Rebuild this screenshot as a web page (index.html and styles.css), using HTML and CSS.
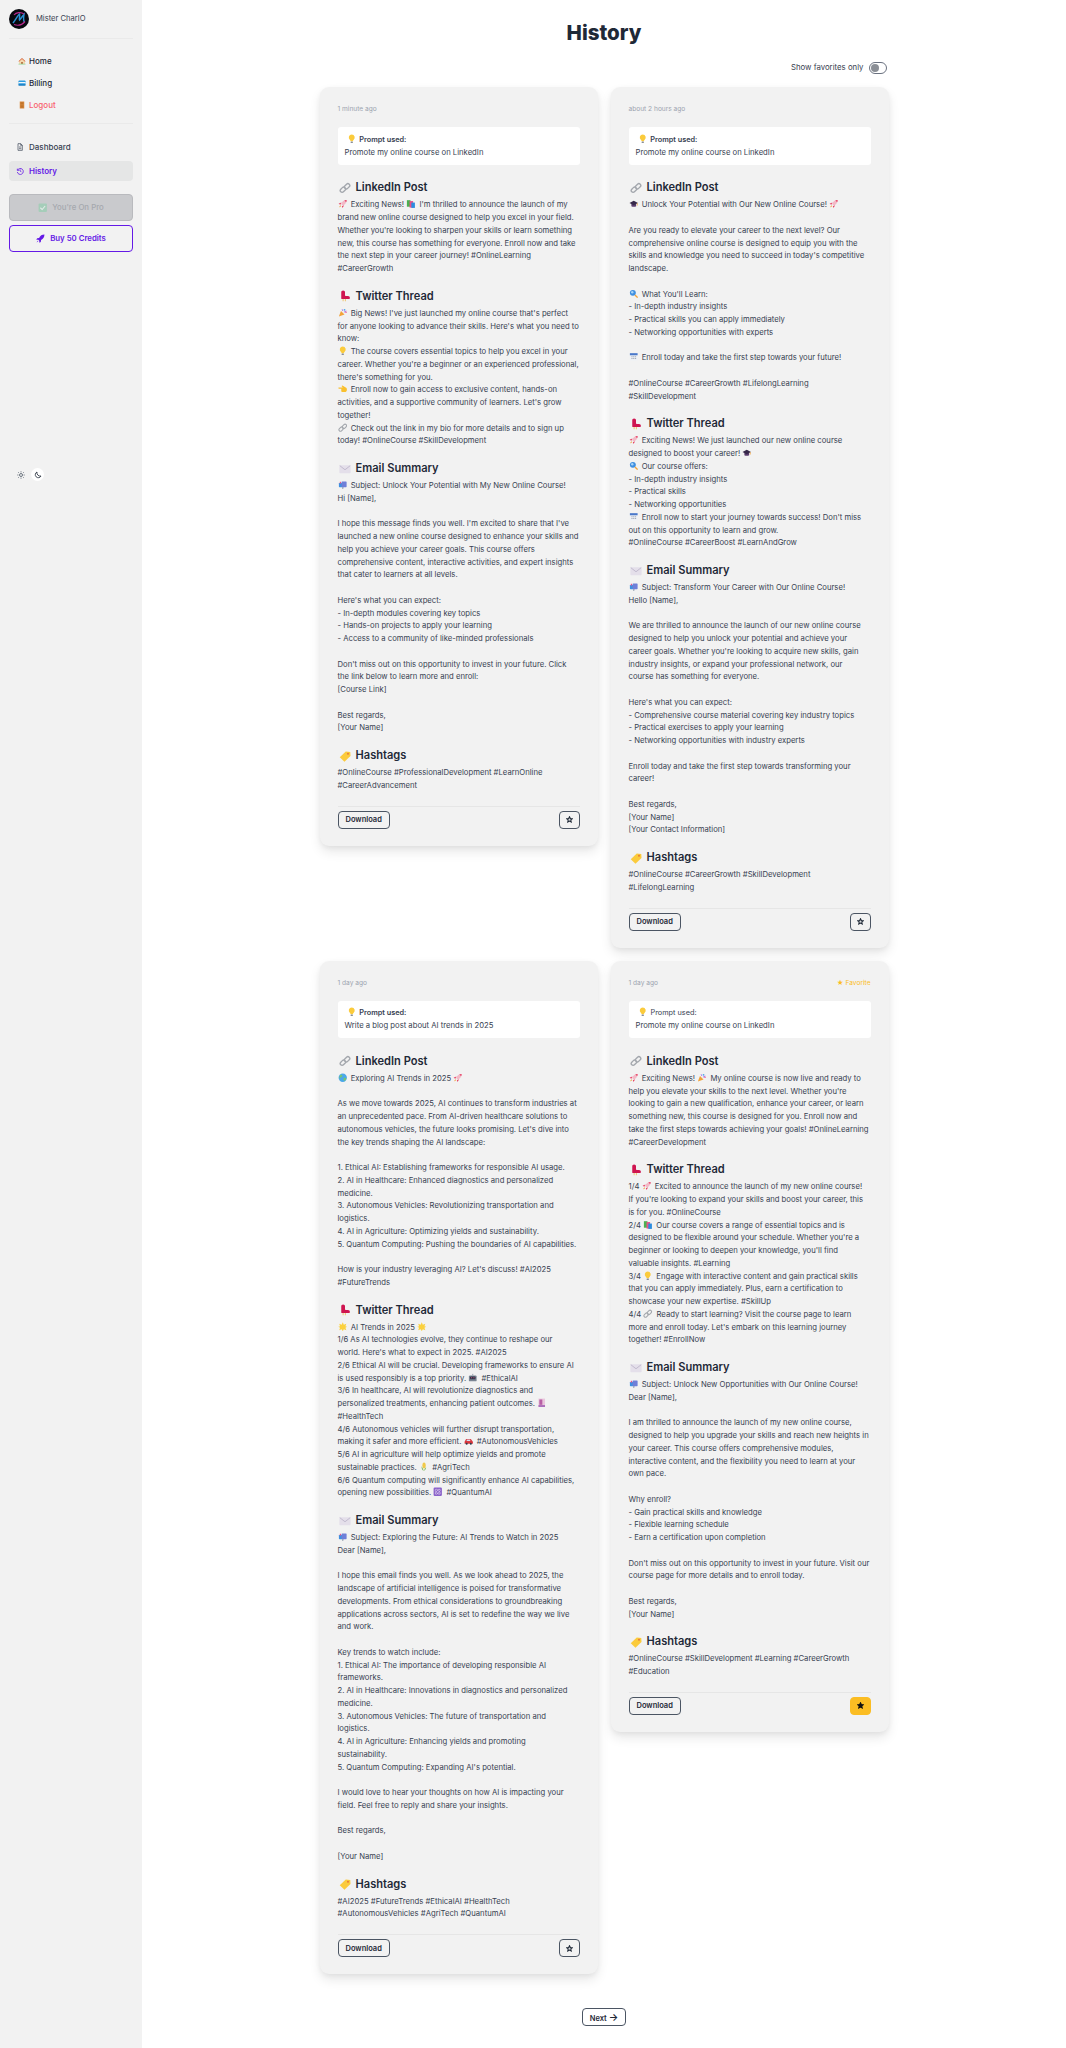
FILE: index.html
```html
<!DOCTYPE html>
<html lang="en">
<head>
  <meta charset="UTF-8" />
  <title>History</title>
  <link rel="stylesheet" href="styles.css">
</head>

<body>

<!-- emoji and icon set -->
<svg class="defs" width="0" height="0" aria-hidden="true">
  <symbol id="e-house" viewBox="0 0 16 16"><path d="M2 8.500 8 3l6 5.500V14H2z" fill="#f4d9b0"/><path d="M1 8.500 8 2l7 6.500-1 1L8 4 2 9.500z" fill="#d9653b"/><rect x="6.500" y="10" width="3" height="4" fill="#a8622f"/><rect x="1" y="13.500" width="14" height="1.500" fill="#8fd694"/></symbol>
  <symbol id="e-card" viewBox="0 0 16 16"><rect x="1" y="3" width="14" height="10" rx="1.500" fill="#2b9be0"/><rect x="1" y="6" width="14" height="2.500" fill="#f2f6fa"/><rect x="1" y="11" width="14" height="2" fill="#1273b5"/></symbol>
  <symbol id="e-door" viewBox="0 0 16 16"><rect x="3.500" y="1" width="9" height="14" fill="#d98a3d"/><rect x="5" y="2.500" width="6" height="4.500" fill="#c0742c"/><rect x="5" y="8.500" width="6" height="5" fill="#c0742c"/></symbol>
  <symbol id="e-bulb" viewBox="0 0 16 16"><path d="M8 1a5 5 0 0 0-3 9c.7.6 1 1.200 1 2h4c0-.8.3-1.400 1-2A5 5 0 0 0 8 1z" fill="#fbcb3c"/><rect x="6" y="12.500" width="4" height="2.500" rx=".8" fill="#8a8f98"/></symbol>
  <symbol id="e-link" viewBox="0 0 16 16"><g fill="none" stroke="#a3a7ad" stroke-width="1.800"><rect x="1.200" y="7.800" width="8" height="5" rx="2.500" transform="rotate(-45 5.200 10.300)"/><rect x="6.800" y="3.200" width="8" height="5" rx="2.500" transform="rotate(-45 10.800 5.700)"/></g></symbol>
  <symbol id="e-rocket" viewBox="0 0 16 16"><path d="M14.500 1.500c-4.500.2-7.500 2.500-9.500 6.500l3 3c4-2 6.300-5 6.500-9.500z" fill="#f3b9c6"/><path d="M14.500 1.500c-1.500 0-2.700.3-3.800.8l3 3c.5-1.100.8-2.300.8-3.800z" fill="#e6395f"/><path d="M5.500 6 1 8l3 1.500zM10 10.500 8 15l-1.500-3z" fill="#e6395f"/><path d="M4 10.500 1.500 14.500 5.500 12z" fill="#f2a33a"/></symbol>
  <symbol id="e-books" viewBox="0 0 16 16"><rect x="1.500" y="2" width="6" height="11" fill="#4caf50"/><rect x="6" y="3.500" width="6" height="11" fill="#e8508a"/><rect x="9" y="6" width="6" height="9" fill="#2b8de0"/></symbol>
  <symbol id="e-thread" viewBox="0 0 16 16"><path d="M3 3c0-1.500 1-2.500 2.500-2.500S8 1.500 8 3v3.500c0 1 .5 1.500 1.500 1.500H12c1.500 0 2.500 1 2.500 2.500v.5c0 .5-.5 1-1 1h-10c-.5 0-.5-.5-.5-1z" fill="#cf1550"/><path d="M5.500 12v3M8.500 12v3" stroke="#f0c36a" stroke-width="1.300"/></symbol>
  <symbol id="e-party" viewBox="0 0 16 16"><path d="M1.500 14.500 5 5l6 6z" fill="#f2a33a"/><circle cx="11" cy="3" r="1.500" fill="#4aa8e8"/><circle cx="13.500" cy="7" r="1.300" fill="#e8508a"/><path d="M7 2l1 3M10 7l4-2" stroke="#9b5de5" stroke-width="1.300"/></symbol>
  <symbol id="e-point" viewBox="0 0 16 16"><path d="M1 6h7l-2-2.500 1.500-1L13 6c1.500.7 2 2 2 3.500 0 2.500-1.500 4-4 4H7c-1 0-1.500-.5-1.500-1.300V8H1.500C.5 8 .5 6 1 6z" fill="#f9c02e"/></symbol>
  <symbol id="e-mail" viewBox="0 0 16 16"><rect x=".5" y="3" width="15" height="10.500" rx="1" fill="#e4dfea"/><path d="M1 3.500 8 9l7-5.500" fill="none" stroke="#b7afc4" stroke-width="1"/></symbol>
  <symbol id="e-mailbox" viewBox="0 0 16 16"><rect x="1.500" y="5" width="9" height="7" rx="1" fill="#3f8fe0"/><rect x="6" y="2.500" width="8.500" height="9.500" rx="1" fill="#6f7fd8"/><rect x="7" y="12" width="2" height="3" fill="#9aa3b2"/><rect x="3" y="3" width="2" height="3" fill="#e8508a"/></symbol>
  <symbol id="e-tag" viewBox="0 0 16 16"><path d="M1 9.500 9 2l6 .5.300 5.500-8 7.500z" fill="#fbcb3c"/><circle cx="12" cy="5" r="1.300" fill="#e8793a"/></symbol>
  <symbol id="e-cap" viewBox="0 0 16 16"><path d="M4 8v4c1.500 1.300 6.500 1.300 8 0V8z" fill="#5a3d6e"/><path d="M8 3 .8 6.800 8 10.500l7.200-3.700z" fill="#36284a"/><path d="M14 7v4" stroke="#f2a33a" stroke-width="1.200"/></symbol>
  <symbol id="e-lens" viewBox="0 0 16 16"><circle cx="6.500" cy="6.500" r="5" fill="#3f8fe0"/><circle cx="5.500" cy="5.500" r="2" fill="#a9d4f5"/><path d="m10 10 4.500 4.500" stroke="#f2a33a" stroke-width="2.200"/></symbol>
  <symbol id="e-cal" viewBox="0 0 16 16"><rect x="1.500" y="2" width="13" height="12.500" rx="1" fill="#eef1f6"/><rect x="1.500" y="2" width="13" height="3.500" fill="#4a78c9"/><path d="M4 8h2M7 8h2M10 8h2M4 11h2M7 11h2M10 11h2" stroke="#8b95a6" stroke-width="1.300"/></symbol>
  <symbol id="e-globe" viewBox="0 0 16 16"><circle cx="8" cy="8" r="7" fill="#4aa8e8"/><path d="M5 2.500c2 1 3 2.500 1.500 4-1 1-3 1-3.500 3C2 8 2.500 4 5 2.500zM10 8c2-.5 3.500 0 4 1-.5 2.500-2 4-3.500 4.500-1-1.500-1.500-4-.5-5.500z" fill="#77c66e"/></symbol>
  <symbol id="e-glow" viewBox="0 0 16 16"><path d="m8 .5 1.800 4 4.200-1.500-1.500 4.200 3 .8-3 1.800 1.500 4L9.800 12 8 15.500 6.200 12 2 13.800l1.500-4-3-1.800 3-.8L2 3l4.200 1.500z" fill="#fbd13f"/></symbol>
  <symbol id="e-robot" viewBox="0 0 16 16"><rect x="1.500" y="4" width="13" height="10" rx="2" fill="#7b8594"/><rect x="3.500" y="6" width="9" height="4.500" rx="1" fill="#2f3747"/><circle cx="6" cy="8" r="1" fill="#e8508a"/><circle cx="10" cy="8" r="1" fill="#e8508a"/><path d="M8 1.500V4" stroke="#7b8594" stroke-width="1.300"/></symbol>
  <symbol id="e-hosp" viewBox="0 0 16 16"><rect x="2.500" y="1" width="11" height="14" fill="#e9c6dc"/><rect x="4" y="2.500" width="5" height="9" fill="#b85fa5"/><rect x="2.500" y="12" width="11" height="3" fill="#a767b8"/></symbol>
  <symbol id="e-car" viewBox="0 0 16 16"><path d="M1 9.500 3.500 5h8L15 9.500V13H1z" fill="#d8353c"/><rect x="4.500" y="6" width="6" height="2.500" fill="#cfe3f2"/><circle cx="4.500" cy="13" r="1.700" fill="#2f3747"/><circle cx="11.500" cy="13" r="1.700" fill="#2f3747"/></symbol>
  <symbol id="e-corn" viewBox="0 0 16 16"><ellipse cx="8.500" cy="6" rx="2.800" ry="5" fill="#f0c94a"/><path d="M8 15C4.500 13 4 9 4.500 7c1 2.500 2.500 4 3.500 8zM8.500 15c2.500-1.500 3.500-3.500 3.500-6-1.500 1.500-3 3-3.500 6z" fill="#7cb95a"/></symbol>
  <symbol id="e-atom" viewBox="0 0 16 16"><rect x="1" y="1" width="14" height="14" rx="2" fill="#8a63c9"/><g fill="none" stroke="#e9def7" stroke-width=".9"><ellipse cx="8" cy="8" rx="5.500" ry="2.200" transform="rotate(45 8 8)"/><ellipse cx="8" cy="8" rx="5.500" ry="2.200" transform="rotate(-45 8 8)"/></g></symbol>
  <symbol id="e-check" viewBox="0 0 16 16"><rect x="1" y="1" width="14" height="14" rx="1.500" fill="#a5cdb9"/><path d="m4 8 3 3 5-6" fill="none" stroke="#e5ece9" stroke-width="1.800"/></symbol>
  <symbol id="i-star" viewBox="0 0 16 16"><path d="m8 1.800 1.900 4 4.400.5-3.300 3 .9 4.400L8 11.500l-3.900 2.200.9-4.400-3.300-3 4.400-.5z"/></symbol>
</svg>

<div class="layout">

  <aside class="sidebar">
    <div class="profile">
      <svg class="avatar" viewBox="0 0 20 20">
        <circle cx="10" cy="10" r="10" fill="#07090f"/>
        <path d="M4 14C7 10 9 6 10.500 5c.5 2-.5 5 0 6 1.500-1.500 3-4 4.500-5.500-.5 3-1 6 .5 7.500" fill="none" stroke="#2a8fd0" stroke-width="1.500"/>
        <path d="M5 15.500c4 1.500 8 .5 11-3M15 5C12 2.500 7 3.500 5 6" fill="none" stroke="#b72a8c" stroke-width="1.200"/>
      </svg>
      <span>Mister CharlO</span>
    </div>

    <nav class="nav-top">
      <a class="nav-item"><svg class="nav-emo"><use href="#e-house"/></svg>Home</a>
      <a class="nav-item"><svg class="nav-emo"><use href="#e-card"/></svg>Billing</a>
      <a class="nav-item logout"><svg class="nav-emo"><use href="#e-door"/></svg>Logout</a>
    </nav>

    <nav class="nav-main">
      <a class="nav-link">
        <svg class="nav-icon" viewBox="0 0 24 24" fill="none" stroke="currentColor" stroke-width="2"><path d="M6 2h8l5 5v15H6z"/><path d="M9 12h7M9 17h7M14 2v5h5"/></svg>
        Dashboard
      </a>
      <a class="nav-link active">
        <svg class="nav-icon" viewBox="0 0 24 24" fill="none" stroke="currentColor" stroke-width="2.400"><path d="M4 5v5h5"/><path d="M4.500 10A9 9 0 1 1 4 15"/><path d="M12 7v5l4 2"/></svg>
        History
      </a>
    </nav>

    <button class="side-btn pro"><svg class="emo"><use href="#e-check"/></svg> You're On Pro</button>
    <button class="side-btn buy">
      <svg class="buy-icon" viewBox="0 0 16 16" fill="currentColor"><path d="M15 1c-4.500 0-7.500 2-9.500 6L2 7.500 0.500 10l3.500.3 1.700 1.700.3 3.500 2.500-1.500.5-3.500C13 8.500 15 5.500 15 1z"/><path d="M3 12l-2 3 3-2z"/></svg>
      Buy 50 Credits
    </button>

    <div class="theme-row">
      <span class="theme-btn">
        <svg viewBox="0 0 24 24" fill="none" stroke="#4b5563" stroke-width="2.400"><circle cx="12" cy="12" r="4.500"/><path d="M12 1v3M12 20v3M1 12h3M20 12h3M4 4l2 2M18 18l2 2M4 20l2-2M18 6l2-2"/></svg>
      </span>
      <span class="theme-btn on">
        <svg viewBox="0 0 24 24" fill="none" stroke="#1f2937" stroke-width="2.400"><path d="M9 3a9 9 0 1 0 12 12A10 10 0 0 1 9 3z"/></svg>
      </span>
    </div>
  </aside>

  <main class="main">
    <h1 class="page-title">History</h1>

    <div class="filter-row">
      <span>Show favorites only</span>
      <span class="toggle"><span class="knob"></span></span>
    </div>

    <div class="history-grid">

      <!-- card 1 -->
      <article class="card">
        <div class="card-top"><span class="time">1 minute ago</span></div>
        <div class="prompt">
          <div class="prompt-label"><svg class="emo"><use href="#e-bulb"/></svg> Prompt used:</div>
          <div>Promote my online course on LinkedIn</div>
        </div>

        <h3 class="sec-title"><svg class="sec-emo"><use href="#e-link"/></svg>LinkedIn Post</h3>
        <p class="sec-text"><svg class="emo"><use href="#e-rocket"/></svg> Exciting News! <svg class="emo"><use href="#e-books"/></svg> I'm thrilled to announce the launch of my brand new online course designed to help you excel in your field. Whether you're looking to sharpen your skills or learn something new, this course has something for everyone. Enroll now and take the next step in your career journey! #OnlineLearning #CareerGrowth</p>

        <h3 class="sec-title"><svg class="sec-emo"><use href="#e-thread"/></svg>Twitter Thread</h3>
        <p class="sec-text"><svg class="emo"><use href="#e-party"/></svg> Big News! I've just launched my online course that's perfect
for anyone looking to advance their skills. Here's what you need to know:
<svg class="emo"><use href="#e-bulb"/></svg> The course covers essential topics to help you excel in your career. Whether you're a beginner or an experienced professional, there's something for you.
<svg class="emo"><use href="#e-point"/></svg> Enroll now to gain access to exclusive content, hands-on activities, and a supportive community of learners. Let's grow together!
<svg class="emo"><use href="#e-link"/></svg> Check out the link in my bio for more details and to sign up today! #OnlineCourse #SkillDevelopment</p>

        <h3 class="sec-title"><svg class="sec-emo"><use href="#e-mail"/></svg>Email Summary</h3>
        <p class="sec-text"><svg class="emo"><use href="#e-mailbox"/></svg> Subject: Unlock Your Potential with My New Online Course!
Hi [Name],

I hope this message finds you well. I'm excited to share that I've launched a new online course designed to enhance your skills and help you achieve your career goals. This course offers comprehensive content, interactive activities, and expert insights that cater to learners at all levels.

Here's what you can expect:
- In-depth modules covering key topics
- Hands-on projects to apply your learning
- Access to a community of like-minded professionals

Don't miss out on this opportunity to invest in your future. Click the link below to learn more and enroll:
[Course Link]

Best regards,
[Your Name]</p>

        <h3 class="sec-title"><svg class="sec-emo"><use href="#e-tag"/></svg>Hashtags</h3>
        <p class="sec-text">#OnlineCourse #ProfessionalDevelopment #LearnOnline #CareerAdvancement</p>

        <div class="card-foot">
          <button class="btn">Download</button>
          <button class="btn star"><svg class="star-icon"><use href="#i-star"/></svg></button>
        </div>
      </article>

      <!-- card 2 -->
      <article class="card">
        <div class="card-top"><span class="time">about 2 hours ago</span></div>
        <div class="prompt">
          <div class="prompt-label"><svg class="emo"><use href="#e-bulb"/></svg> Prompt used:</div>
          <div>Promote my online course on LinkedIn</div>
        </div>

        <h3 class="sec-title"><svg class="sec-emo"><use href="#e-link"/></svg>LinkedIn Post</h3>
        <p class="sec-text"><svg class="emo"><use href="#e-cap"/></svg> Unlock Your Potential with Our New Online Course! <svg class="emo"><use href="#e-rocket"/></svg>

Are you ready to elevate your career to the next level? Our comprehensive online course is designed to equip you with the skills and knowledge you need to succeed in today's competitive landscape.

<svg class="emo"><use href="#e-lens"/></svg> What You'll Learn:
- In-depth industry insights
- Practical skills you can apply immediately
- Networking opportunities with experts

<svg class="emo"><use href="#e-cal"/></svg> Enroll today and take the first step towards your future!

#OnlineCourse #CareerGrowth #LifelongLearning #SkillDevelopment</p>

        <h3 class="sec-title"><svg class="sec-emo"><use href="#e-thread"/></svg>Twitter Thread</h3>
        <p class="sec-text"><svg class="emo"><use href="#e-rocket"/></svg> Exciting News! We just launched our new online course designed to boost your career! <svg class="emo"><use href="#e-cap"/></svg>
<svg class="emo"><use href="#e-lens"/></svg> Our course offers:
- In-depth industry insights
- Practical skills
- Networking opportunities
<svg class="emo"><use href="#e-cal"/></svg> Enroll now to start your journey towards success! Don't miss out on this opportunity to learn and grow.
#OnlineCourse #CareerBoost #LearnAndGrow</p>

        <h3 class="sec-title"><svg class="sec-emo"><use href="#e-mail"/></svg>Email Summary</h3>
        <p class="sec-text"><svg class="emo"><use href="#e-mailbox"/></svg> Subject: Transform Your Career with Our Online Course!
Hello [Name],

We are thrilled to announce the launch of our new online course designed to help you unlock your potential and achieve your career goals. Whether you're looking to acquire new skills, gain industry insights, or expand your professional network, our
course has something for everyone.

Here's what you can expect:
- Comprehensive course material covering key industry topics
- Practical exercises to apply your learning
- Networking opportunities with industry experts

Enroll today and take the first step towards transforming your career!

Best regards,
[Your Name]
[Your Contact Information]</p>

        <h3 class="sec-title"><svg class="sec-emo"><use href="#e-tag"/></svg>Hashtags</h3>
        <p class="sec-text">#OnlineCourse #CareerGrowth #SkillDevelopment #LifelongLearning</p>

        <div class="card-foot">
          <button class="btn">Download</button>
          <button class="btn star"><svg class="star-icon"><use href="#i-star"/></svg></button>
        </div>
      </article>

      <!-- card 3 -->
      <article class="card">
        <div class="card-top"><span class="time">1 day ago</span></div>
        <div class="prompt">
          <div class="prompt-label"><svg class="emo"><use href="#e-bulb"/></svg> Prompt used:</div>
          <div>Write a blog post about AI trends in 2025</div>
        </div>

        <h3 class="sec-title"><svg class="sec-emo"><use href="#e-link"/></svg>LinkedIn Post</h3>
        <p class="sec-text"><svg class="emo"><use href="#e-globe"/></svg> Exploring AI Trends in 2025 <svg class="emo"><use href="#e-rocket"/></svg>

As we move towards 2025, AI continues to transform industries at an unprecedented pace. From AI-driven healthcare solutions to autonomous vehicles, the future looks promising. Let's dive into the key trends shaping the AI landscape:

1. Ethical AI: Establishing frameworks for responsible AI usage.
2. AI in Healthcare: Enhanced diagnostics and personalized medicine.
3. Autonomous Vehicles: Revolutionizing transportation and logistics.
4. AI in Agriculture: Optimizing yields and sustainability.
5. Quantum Computing: Pushing the boundaries of AI capabilities.

How is your industry leveraging AI? Let's discuss! #AI2025 #FutureTrends</p>

        <h3 class="sec-title"><svg class="sec-emo"><use href="#e-thread"/></svg>Twitter Thread</h3>
        <p class="sec-text"><svg class="emo"><use href="#e-glow"/></svg> AI Trends in 2025 <svg class="emo"><use href="#e-glow"/></svg>
1/6 As AI technologies evolve, they continue to reshape our
world. Here's what to expect in 2025. #AI2025
2/6 Ethical AI will be crucial. Developing frameworks to ensure AI is used responsibly is a top priority. <svg class="emo"><use href="#e-robot"/></svg> #EthicalAI
3/6 In healthcare, AI will revolutionize diagnostics and personalized treatments, enhancing patient outcomes. <svg class="emo"><use href="#e-hosp"/></svg> #HealthTech
4/6 Autonomous vehicles will further disrupt transportation, making it safer and more efficient. <svg class="emo"><use href="#e-car"/></svg> #AutonomousVehicles
5/6 AI in agriculture will help optimize yields and promote sustainable practices. <svg class="emo"><use href="#e-corn"/></svg> #AgriTech
6/6 Quantum computing will significantly enhance AI capabilities, opening new possibilities. <svg class="emo"><use href="#e-atom"/></svg> #QuantumAI</p>

        <h3 class="sec-title"><svg class="sec-emo"><use href="#e-mail"/></svg>Email Summary</h3>
        <p class="sec-text"><svg class="emo"><use href="#e-mailbox"/></svg> Subject: Exploring the Future: AI Trends to Watch in 2025
Dear [Name],

I hope this email finds you well. As we look ahead to 2025, the landscape of artificial intelligence is poised for transformative developments. From ethical considerations to groundbreaking applications across sectors, AI is set to redefine the way we live and work.

Key trends to watch include:
1. Ethical AI: The importance of developing responsible AI frameworks.
2. AI in Healthcare: Innovations in diagnostics and personalized medicine.
3. Autonomous Vehicles: The future of transportation and logistics.
4. AI in Agriculture: Enhancing yields and promoting
sustainability.
5. Quantum Computing: Expanding AI's potential.

I would love to hear your thoughts on how AI is impacting your field. Feel free to reply and share your insights.

Best regards,

[Your Name]</p>

        <h3 class="sec-title"><svg class="sec-emo"><use href="#e-tag"/></svg>Hashtags</h3>
        <p class="sec-text">#AI2025 #FutureTrends #EthicalAI #HealthTech #AutonomousVehicles #AgriTech #QuantumAI</p>

        <div class="card-foot">
          <button class="btn">Download</button>
          <button class="btn star"><svg class="star-icon"><use href="#i-star"/></svg></button>
        </div>
      </article>

      <!-- card 4 -->
      <article class="card">
        <div class="card-top"><span class="time">1 day ago</span><span class="fav-mark">★ Favorite</span></div>
        <div class="prompt">
          <div class="prompt-label plain"><svg class="emo"><use href="#e-bulb"/></svg> Prompt used:</div>
          <div>Promote my online course on LinkedIn</div>
        </div>

        <h3 class="sec-title"><svg class="sec-emo"><use href="#e-link"/></svg>LinkedIn Post</h3>
        <p class="sec-text"><svg class="emo"><use href="#e-rocket"/></svg> Exciting News! <svg class="emo"><use href="#e-party"/></svg> My online course is now live and ready to help you elevate your skills to the next level. Whether you're looking to gain a new qualification, enhance your career, or learn something new, this course is designed for you. Enroll now and take the first steps towards achieving your goals! #OnlineLearning #CareerDevelopment</p>

        <h3 class="sec-title"><svg class="sec-emo"><use href="#e-thread"/></svg>Twitter Thread</h3>
        <p class="sec-text">1/4 <svg class="emo"><use href="#e-rocket"/></svg> Excited to announce the launch of my new online course!
If you're looking to expand your skills and boost your career, this
is for you. #OnlineCourse
2/4 <svg class="emo"><use href="#e-books"/></svg> Our course covers a range of essential topics and is designed to be flexible around your schedule. Whether you're a
beginner or looking to deepen your knowledge, you'll find
valuable insights. #Learning
3/4 <svg class="emo"><use href="#e-bulb"/></svg> Engage with interactive content and gain practical skills that you can apply immediately. Plus, earn a certification to showcase your new expertise. #SkillUp
4/4 <svg class="emo"><use href="#e-link"/></svg> Ready to start learning? Visit the course page to learn more and enroll today. Let's embark on this learning journey together! #EnrollNow</p>

        <h3 class="sec-title"><svg class="sec-emo"><use href="#e-mail"/></svg>Email Summary</h3>
        <p class="sec-text"><svg class="emo"><use href="#e-mailbox"/></svg> Subject: Unlock New Opportunities with Our Online Course!
Dear [Name],

I am thrilled to announce the launch of my new online course, designed to help you upgrade your skills and reach new heights in your career. This course offers comprehensive modules, interactive content, and the flexibility you need to learn at your own pace.

Why enroll?
- Gain practical skills and knowledge
- Flexible learning schedule
- Earn a certification upon completion

Don't miss out on this opportunity to invest in your future. Visit our course page for more details and to enroll today.

Best regards,
[Your Name]</p>

        <h3 class="sec-title"><svg class="sec-emo"><use href="#e-tag"/></svg>Hashtags</h3>
        <p class="sec-text">#OnlineCourse #SkillDevelopment #Learning #CareerGrowth #Education</p>

        <div class="card-foot">
          <button class="btn">Download</button>
          <button class="btn star starred"><svg class="star-icon"><use href="#i-star"/></svg></button>
        </div>
      </article>

    </div>

    <div class="pager">
      <button class="btn">Next <span class="arrow">→</span></button>
    </div>
  </main>

</div>

</body>
</html>
```
FILE: styles.css
```css
body {
  font-family: Inter, 'Noto Sans', sans-serif;
  background: #fff;
  color: #1f2937;
  margin: 0;
  font-size: 8px;
  line-height: 1.5;
}

.defs {
  position: absolute;
}

.layout {
  display: flex;
  min-height: 100vh;
}

/* sidebar */
.sidebar {
  width: 142px;
  flex-shrink: 0;
  box-sizing: border-box;
  background: #f2f2f2;
  padding: 9px;
}

.profile {
  display: flex;
  align-items: center;
  gap: 7px;
  padding-bottom: 9px;
  border-bottom: 1px solid #eaeaea;
  color: #374151;
  font-size: 7.6px;
}

.avatar {
  width: 20px;
  height: 20px;
}

.nav-top {
  padding: 10.5px 0 7px;
  border-bottom: 1px solid #eaeaea;
}

.nav-item {
  display: flex;
  align-items: center;
  height: 22.3px;
  padding-left: 9px;
  gap: 3px;
  font-weight: 500;
}

.nav-emo {
  width: 8px;
  height: 8px;
}

.logout {
  color: #f8626f;
}

.nav-main {
  padding-top: 12.5px;
}

.nav-link {
  display: flex;
  align-items: center;
  gap: 5px;
  height: 20px;
  padding-left: 7px;
  margin-bottom: 4px;
  color: #374151;
  font-weight: 500;
  border-radius: 4px;
}

.nav-icon {
  width: 8px;
  height: 8px;
}

.nav-link.active {
  background: #e5e6e6;
  color: #6419e6;
  font-weight: 600;
}

.side-btn {
  display: flex;
  align-items: center;
  justify-content: center;
  gap: 3px;
  width: 100%;
  height: 27px;
  font-family: inherit;
  font-size: 7.8px;
  border-radius: 4px;
  margin-bottom: 4px;
  font-weight: 500;
}

.pro {
  margin-top: 13px;
  background: #c9cacd;
  border: 1px solid #b9babe;
  color: #a5a8ae;
}

.buy {
  background: transparent;
  border: 1px solid #6419e6;
  color: #6419e6;
  font-weight: 600;
  gap: 5px;
}

.buy-icon {
  width: 9px;
  height: 9px;
}

.theme-row {
  display: flex;
  align-items: center;
  gap: 4px;
  margin-top: 216.5px;
  padding-left: 5px;
}

.theme-btn {
  display: flex;
  align-items: center;
  justify-content: center;
  width: 13px;
  height: 13px;
  border-radius: 50%;
}

.theme-btn svg {
  width: 8px;
  height: 8px;
}

.theme-btn.on {
  background: #fff;
}

/* main */
.main {
  flex: 1;
  min-width: 0;
  padding-top: 18px;
}

.page-title {
  margin: 0;
  text-align: center;
  font-size: 20.5px;
  line-height: 30px;
  font-weight: 800;
  color: #1f2937;
}

.filter-row {
  width: 569px;
  margin: 13.5px auto 12.5px;
  display: flex;
  justify-content: flex-end;
  align-items: center;
  gap: 5px;
  height: 13px;
  font-size: 7.8px;
  color: #374151;
}

.toggle {
  display: block;
  box-sizing: border-box;
  width: 18px;
  height: 12px;
  border: 1px solid #6b7280;
  border-radius: 6px;
  padding: 1px;
  margin-right: 2px;
}

.knob {
  display: block;
  width: 8px;
  height: 8px;
  border-radius: 50%;
  background: #8b8f96;
}

.history-grid {
  width: 569px;
  margin: 0 auto;
  display: grid;
  grid-template-columns: 278px 278px;
  column-gap: 13px;
  row-gap: 13px;
  align-items: start;
}

.card {
  background: #f2f2f2;
  border-radius: 9px;
  padding: 17px 18px 17px;
  box-shadow: 0 6px 12px rgba(0,0,0,0.09), 0 2px 5px rgba(0,0,0,0.05);
}

.card-top {
  display: flex;
  justify-content: space-between;
  font-size: 6.6px;
  line-height: 10px;
  color: #9ca3af;
  margin-bottom: 13px;
}

.fav-mark {
  color: #fbbd23;
}

.prompt {
  background: #fff;
  border-radius: 3px;
  padding: 5.5px 7px;
  font-size: 7.7px;
  line-height: 13.4px;
  color: #374151;
  margin-bottom: 15.5px;
}

.prompt-label {
  padding-left: 2px;
  font-size: 7.3px;
  font-weight: 600;
}

.prompt-label.plain {
  font-weight: 400;
}

.sec-title {
  display: flex;
  align-items: center;
  gap: 5px;
  margin: 0 0 4px;
  padding-left: 1px;
  font-size: 11.1px;
  line-height: 15px;
  font-weight: 600;
  color: #1f2937;
}

.sec-emo {
  width: 12px;
  height: 12px;
}

.sec-text {
  margin: 0 0 13px;
  white-space: pre-line;
  font-size: 7.7px;
  line-height: 12.75px;
  color: #374151;
}

.emo {
  width: 9.5px;
  height: 9.5px;
  vertical-align: -1.5px;
  margin-right: 1.5px;
}

.card-foot {
  display: flex;
  justify-content: space-between;
  border-top: 1px solid #e6e6e6;
  padding-top: 4px;
}

.btn {
  height: 18px;
  padding: 0 7px;
  background: transparent;
  border: 1px solid #4b5563;
  border-radius: 4px;
  font-family: inherit;
  font-size: 7.5px;
  font-weight: 600;
  color: #1f2937;
}

.arrow {
  font-size: 10px;
  line-height: 1;
}

.star {
  display: flex;
  align-items: center;
  justify-content: center;
  width: 21px;
  padding: 0;
}

.star-icon {
  width: 7px;
  height: 7px;
  fill: #d9dade;
  stroke: #1f2937;
  stroke-width: 2.5;
}

.starred {
  background: #fbbd23;
  border-color: #fbbd23;
}

.starred .star-icon {
  fill: #111;
  stroke: #111;
}

.pager {
  display: flex;
  justify-content: center;
  margin-top: 34px;
}
```
